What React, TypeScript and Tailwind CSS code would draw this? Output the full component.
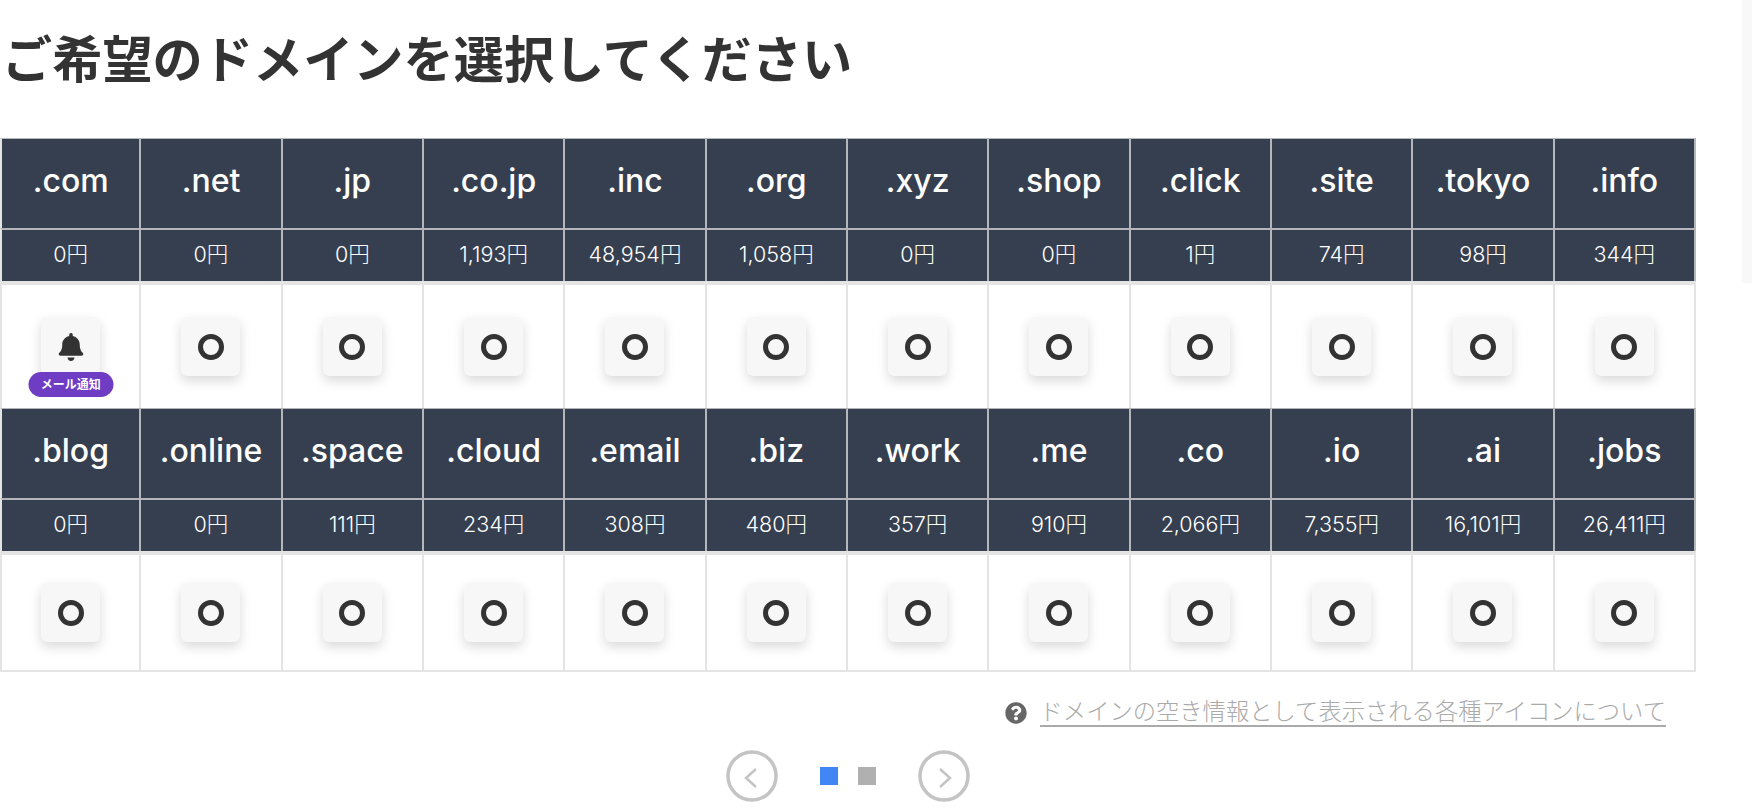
import { FaBell, FaQuestionCircle } from "react-icons/fa";

interface Domain {
  tld: string;
  price: string;
  notify?: boolean;
}

const FIRST: Domain[] = [
  { tld: ".com", price: "0円", notify: true },
  { tld: ".net", price: "0円" },
  { tld: ".jp", price: "0円" },
  { tld: ".co.jp", price: "1,193円" },
  { tld: ".inc", price: "48,954円" },
  { tld: ".org", price: "1,058円" },
  { tld: ".xyz", price: "0円" },
  { tld: ".shop", price: "0円" },
  { tld: ".click", price: "1円" },
  { tld: ".site", price: "74円" },
  { tld: ".tokyo", price: "98円" },
  { tld: ".info", price: "344円" },
];

const SECOND: Domain[] = [
  { tld: ".blog", price: "0円" },
  { tld: ".online", price: "0円" },
  { tld: ".space", price: "111円" },
  { tld: ".cloud", price: "234円" },
  { tld: ".email", price: "308円" },
  { tld: ".biz", price: "480円" },
  { tld: ".work", price: "357円" },
  { tld: ".me", price: "910円" },
  { tld: ".co", price: "2,066円" },
  { tld: ".io", price: "7,355円" },
  { tld: ".ai", price: "16,101円" },
  { tld: ".jobs", price: "26,411円" },
];

function DomainRows({ items, iconRow }: { items: Domain[]; iconRow: string }) {
  return (
    <div className="grid grid-cols-12">
      {items.map((d) => (
        <div
          key={d.tld}
          className="flex h-[90px] items-center justify-center border-t border-r-2 border-[#b4b6ba] bg-[#363f4f] pb-[5px] text-[32px] font-medium text-white first:border-l-2 first:border-l-[#e4e4e4]"
        >
          {d.tld}
        </div>
      ))}
      {items.map((d) => (
        <div
          key={d.tld}
          className="flex h-[53px] items-center justify-center border-t-2 border-r-2 border-[#b4b6ba] bg-[#363f4f] pb-[2px] text-[21.5px] font-light text-white nth-[13]:border-l-2 nth-[13]:border-l-[#e4e4e4]"
        >
          {d.price}
        </div>
      ))}
      {items.map((d) => (
        <div
          key={d.tld}
          className={`flex items-center justify-center border-t-4 border-r-2 border-[#e4e4e4] bg-white nth-[25]:border-l-2 ${iconRow}`}
        >
          <div className="relative flex h-[59px] w-[59px] items-center justify-center rounded-[6px] bg-[#f7f7f7] shadow-[0_5px_12px_rgba(0,0,0,0.15)]">
            {d.notify ? (
              <FaBell className="h-[28px] w-[28px] text-[#333333]" />
            ) : (
              <svg viewBox="0 0 26 26" className="h-[26px] w-[26px]">
                <circle cx="13" cy="13" r="10.5" fill="none" stroke="#333333" strokeWidth="5" />
              </svg>
            )}
            {d.notify && (
              <span className="absolute top-[55px] left-1/2 flex h-[25px] w-[85px] -translate-x-1/2 items-center justify-center rounded-full bg-[#6f3cc4] text-[12px] font-bold text-white">
                メール通知
              </span>
            )}
          </div>
        </div>
      ))}
    </div>
  );
}

export default function App() {
  return (
    <div className="relative h-[808px] w-[1752px] overflow-hidden bg-white font-['Inter','Noto_Sans_CJK_JP',sans-serif] text-[#333333]">
      <div className="absolute top-0 right-0 h-[283px] w-[10px] bg-[#f8f8f8]" />
      <div className="w-[1696px]">
        <h1 className="pt-[24px] pb-[42px] pl-[2px] text-[50.2px] leading-[72px] font-bold whitespace-nowrap">
          ご希望のドメインを選択してください
        </h1>
        <DomainRows items={FIRST} iconRow="h-[127px]" />
        <DomainRows items={SECOND} iconRow="h-[121px] border-b-2" />
        <div className="mt-[27px] flex items-center justify-end pr-[30px] text-[23.3px] font-light text-[#aaaaaa]">
          <FaQuestionCircle className="mr-[13px] h-[22px] w-[22px] text-[#666666]" />
          <span className="border-b-2 border-[#aaaaaa] leading-[26px] whitespace-nowrap">
            ドメインの空き情報として表示される各種アイコンについて
          </span>
        </div>
        <div className="mt-[23px] flex items-center justify-center">
          <svg viewBox="0 0 52 52" className="h-[52px] w-[52px]">
            <circle cx="26" cy="26" r="24" fill="none" stroke="#c4c4c4" strokeWidth="3.5" />
            <path d="M30 19l-10 9 10 9" fill="none" stroke="#c4c4c4" strokeWidth="2.5" />
          </svg>
          <div className="mr-[20px] ml-[42px] h-[18px] w-[18px] bg-[#4285f4]" />
          <div className="mr-[42px] h-[18px] w-[18px] bg-[#b0b0b0]" />
          <svg viewBox="0 0 52 52" className="h-[52px] w-[52px]">
            <circle cx="26" cy="26" r="24" fill="none" stroke="#c4c4c4" strokeWidth="3.5" />
            <path d="M22 19l10 9-10 9" fill="none" stroke="#c4c4c4" strokeWidth="2.5" />
          </svg>
        </div>
      </div>
    </div>
  );
}
